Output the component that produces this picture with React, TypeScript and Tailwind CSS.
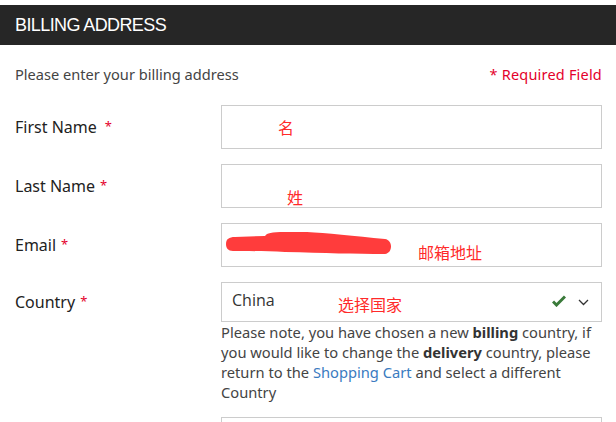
import React from "react";

const noto = { fontFamily: "'Noto Sans', 'Open Sans', sans-serif" };

function Label({ text, gap }: { text: string; gap?: boolean }) {
  return (
    <div className="w-[206px] shrink-0 flex items-center text-[16px] text-[#222]" style={noto}>
      {text}
      <span className={`${gap ? "ml-[8px]" : "ml-[5px]"} text-[#e4002b] text-[13px]`}>*</span>
    </div>
  );
}

export default function App() {
  return (
    <div className="w-[616px] h-[422px] bg-white overflow-hidden relative">
      <div className="mt-[5px] h-[40px] bg-[#262626] flex items-center px-[15px]">
        <span
          className="text-white text-[18px] tracking-[-0.6px]"
          style={{ fontFamily: "'Liberation Sans', Arial, sans-serif" }}
        >
          BILLING ADDRESS
        </span>
      </div>
      <div
        className="h-[59px] flex items-center justify-between pl-[15px] pr-[14px] text-[14.6px]"
        style={noto}
      >
        <span className="text-[#444]">Please enter your billing address</span>
        <span className="text-[#e4002b] text-[14.5px] tracking-[0.2px]">* Required Field</span>
      </div>

      <div className="flex flex-col gap-[15px] pl-[15px] pt-[1px]">
        <div className="flex h-[44px]">
          <Label text="First Name" gap />
          <div className="w-[381px] border border-[#cccccc]" />
        </div>
        <div className="flex h-[44px]">
          <Label text="Last Name" />
          <div className="w-[381px] border border-[#cccccc]" />
        </div>
        <div className="flex h-[44px]">
          <Label text="Email" />
          <div className="w-[381px] border border-[#cccccc]" />
        </div>
        <div className="flex">
          <div className="h-[40px] flex">
            <Label text="Country" />
          </div>
          <div className="w-[381px]">
            <div className="h-[40px] border border-[#cccccc] flex items-center pl-[10px] pr-[12px]">
              <span
                className="text-[16px] text-[#333] flex-1 -mt-[4px]"
                style={{ fontFamily: "'Open Sans', 'Noto Sans', sans-serif" }}
              >
                China
              </span>
              <svg width="14" height="12" viewBox="0 0 14 12" className="mr-[12px] -mt-[2px]">
                <path d="M1 6.5 L4.5 10 L13 1.5" stroke="#3a7a3a" strokeWidth="3" fill="none" strokeLinejoin="miter" />
              </svg>
              <svg width="11" height="7" viewBox="0 0 11 7">
                <path d="M1 1 L5.5 5.5 L10 1" stroke="#333" strokeWidth="1.3" fill="none" />
              </svg>
            </div>
            <p className="text-[14.7px] leading-[20px] text-[#444] pr-[6px]" style={noto}>
              Please note, you have chosen a new <b className="text-[#333]">billing</b> country, if you
              would like to change the <b className="text-[#333]">delivery</b> country, please return to
              the <span className="text-[#3a7bbf]">Shopping Cart</span> and select a different Country
            </p>
            <div className="mt-[15px] h-[40px] border border-[#cccccc]" />
          </div>
        </div>
      </div>

      {/* annotations */}
      <svg className="absolute left-[225px] top-[230px]" width="170" height="26" viewBox="0 0 170 26">
        <path
          d="M1,14 C1,9 4,7 10,7 L40,6 C42,3 46,2 60,2 L82,2 C100,3 130,6 160,9 C168,10 168,23 160,24 C130,24 100,23 60,22 C40,21 20,21 8,21 C3,21 1,18 1,14 Z"
          fill="#ff3c3c"
        />
      </svg>
      <span
        className="absolute left-[278px] top-[119px] text-[16px] text-[#ff2a2a] leading-none"
        style={{ fontFamily: "'Noto Sans CJK SC', sans-serif" }}
      >
        名
      </span>
      <span
        className="absolute left-[287px] top-[189px] text-[16px] text-[#ff2a2a] leading-none"
        style={{ fontFamily: "'Noto Sans CJK SC', sans-serif" }}
      >
        姓
      </span>
      <span
        className="absolute left-[418px] top-[244px] text-[16px] text-[#ff2a2a] leading-none"
        style={{ fontFamily: "'Noto Sans CJK SC', sans-serif" }}
      >
        邮箱地址
      </span>
      <span
        className="absolute left-[338px] top-[296px] text-[16px] text-[#ff2a2a] leading-none"
        style={{ fontFamily: "'Noto Sans CJK SC', sans-serif" }}
      >
        选择国家
      </span>
    </div>
  );
}
